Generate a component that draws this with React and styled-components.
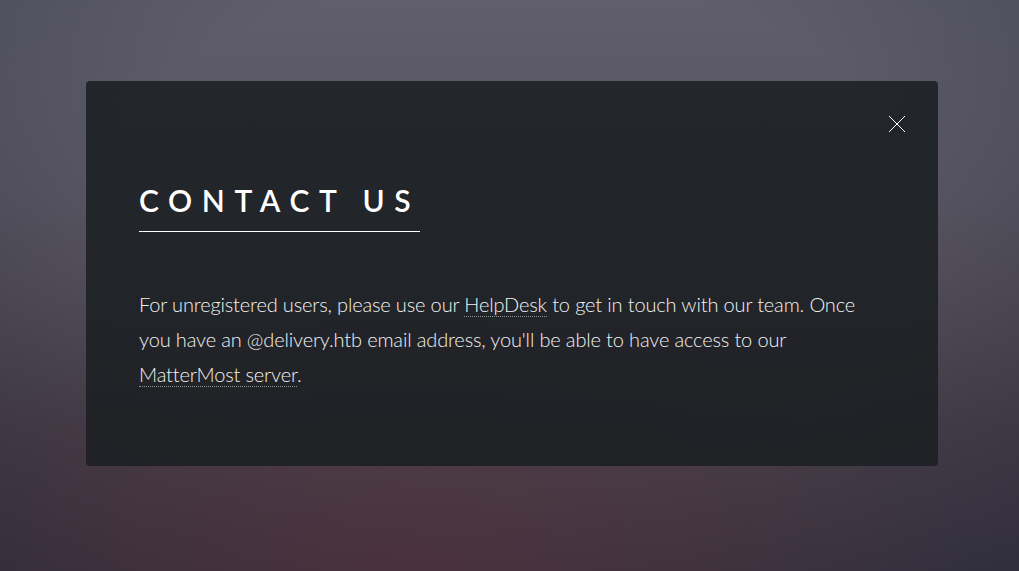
import React from 'react';
import styled, { createGlobalStyle } from 'styled-components';

const GlobalStyle = createGlobalStyle`
	html, body {
		margin: 0;
		padding: 0;
		height: 100%;
	}
	body {
		font-family: Lato, "Open Sans", sans-serif;
		font-weight: 300;
		color: #ffffff;
		-webkit-font-smoothing: antialiased;
	}
	#root {
		height: 100%;
	}
`;

const Page = styled.div`
	box-sizing: border-box;
	min-height: 100vh;
	padding: 81px 81px 105px 86px;
	background:
		radial-gradient(ellipse 55% 45% at 40% 100%, rgba(95, 45, 55, 0.45), rgba(95, 45, 55, 0) 100%),
		radial-gradient(ellipse 75% 80% at 50% 40%, rgba(0, 0, 0, 0) 55%, rgba(10, 10, 30, 0.25) 100%),
		linear-gradient(180deg, #5f5e6a 0%, #55535f 35%, #463f4a 75%, #3e3a46 100%);
`;

const Card = styled.article`
	position: relative;
	box-sizing: border-box;
	height: 385px;
	padding: 103px 53px 0 53px;
	border-radius: 4px;
	background: rgba(27, 31, 34, 0.88);
`;

const Close = styled.button`
	position: absolute;
	top: 11px;
	right: 9px;
	width: 64px;
	height: 64px;
	padding: 0;
	border: 0;
	background: transparent;
	cursor: pointer;
	display: flex;
	align-items: center;
	justify-content: center;
`;

const Heading = styled.h2`
	display: inline-block;
	margin: 0 0 55px 0;
	padding: 0 0 14px 0;
	border-bottom: 1px solid #ffffff;
	font-family: Lato, "Open Sans", sans-serif;
	font-weight: 600;
	font-size: 30px;
	line-height: 1.1;
	letter-spacing: 9.6px;
	text-transform: uppercase;
	color: #ffffff;
`;

const Text = styled.p`
	margin: 0;
	font-size: 20px;
	line-height: 35px;
	letter-spacing: -0.15px;
	color: #f2f2f2;
`;

const Link = styled.a`
	color: inherit;
	text-decoration: none;
	border-bottom: dotted 1px rgba(255, 255, 255, 0.5);
`;

function CloseIcon() {
	return (
		<svg width="18" height="18" viewBox="0 0 18 18">
			<path d="M1 1 L17 17 M17 1 L1 17" stroke="#ffffff" strokeWidth="1" fill="none" />
		</svg>
	);
}

export default function App() {
	return (
		<>
			<GlobalStyle />
			<Page>
				<Card>
					<Close aria-label="Close"><CloseIcon /></Close>
					<Heading>Contact Us</Heading>
					<Text>
						For unregistered users, please use our <Link href="#">HelpDesk</Link> to get in touch with our team. Once you have an @delivery.htb email address, you'll be able to have access to our <Link href="#">MatterMost server</Link>.
					</Text>
				</Card>
			</Page>
		</>
	);
}
